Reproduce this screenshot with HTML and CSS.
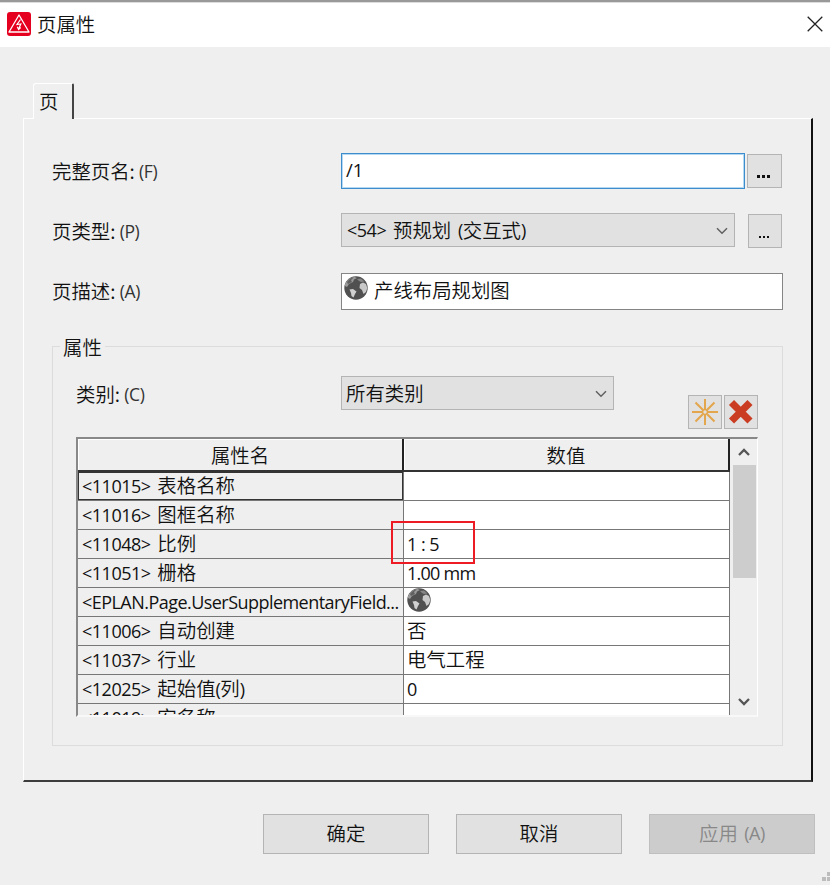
FILE: index.html
```html
<!DOCTYPE html>
<html lang="zh-CN">
<head>
<meta charset="utf-8">
<title>页属性</title>
<link rel="stylesheet" href="styles.css">
</head>
<body>
<svg class="defs" width="0" height="0">
  <symbol id="globe" viewBox="0 0 24 24">
    <circle cx="12" cy="12" r="11.7" fill="#505050"/>
    <path d="M1 8Q4 2 10 .8L13 2 10 3.500 9 6 5 8 3 11 1 10Z" fill="#999"/>
    <path d="M3 6Q6 2 10 1.300L7 4 8 6 4 8Z" fill="#606060"/>
    <path d="M5.500 13.500 9 13 12.500 15.500 11 18 9.500 21.500 7.500 20 7 17Z" fill="#d0d0d0"/>
    <path d="M16 8 19 6.500 22 8 23.300 12 22 16 19.500 18 18 14 15.500 12Z" fill="#c8c8c8"/>
    <path d="M13 3 17 2.500 20.500 5.500 17 6 15 5Z" fill="#858585"/>
  </symbol>
  <symbol id="down" viewBox="0 0 12 8"><path d="M1 1.200 6 6.200 11 1.200" fill="none" stroke="#606060" stroke-width="1.500"/></symbol>
</svg>
<div class="window">
  <header class="titlebar">
    <svg class="app-icon" viewBox="0 0 24 24">
      <rect width="24" height="24" rx="3" fill="#e6001f"/>
      <path d="M12 3 22 20H2Z" fill="none" stroke="#fff" stroke-width="1.300" stroke-linejoin="round"/>
      <path d="M13.500 7.500 10 12.500 13.800 12 11.700 17M10.300 14.700 11.600 17.500 13.700 15.500" fill="none" stroke="#fff" stroke-width="1.200"/>
    </svg>
    <span class="title">页属性</span>
    <svg class="close" viewBox="0 0 16 16"><path d="M.7.700 15.300 15.300M15.300.700.7 15.300" stroke="#222" stroke-width="1.300"/></svg>
  </header>
  <main>
    <div class="tab">页</div>
    <section class="panel">
      <div class="field">
        <label>完整页名: <i>(F)</i></label>
        <div class="input focused"><b>/1</b></div>
        <div class="more bold"><s></s><s></s><s></s></div>
      </div>
      <div class="field">
        <label>页类型: <i>(P)</i></label>
        <div class="select type"><span><b>&lt;54&gt;</b> 预规划 <b>(</b>交互式<b>)</b></span><svg class="chev"><use href="#down"/></svg></div>
        <div class="more small"><s></s><s></s><s></s></div>
      </div>
      <div class="field">
        <label>页描述: <i>(A)</i></label>
        <div class="input desc"><svg class="globe"><use href="#globe"/></svg><span>产线布局规划图</span></div>
      </div>
      <fieldset>
        <legend>属性</legend>
        <div class="category">
          <label>类别: <i>(C)</i></label>
          <div class="select"><span>所有类别</span><svg class="chev"><use href="#down"/></svg></div>
          <div class="tools">
            <div class="tool"><svg viewBox="0 0 28 28"><path d="M14 1V11M14 17V27M1 14H11M17 14H27M4.500 4.500 11.800 11.800M16.200 16.200 23.500 23.500M23.500 4.500 16.200 11.800M11.800 16.200 4.500 23.500" stroke="#e3a64c" stroke-width="2"/><circle cx="14" cy="14" r="2.500" fill="none" stroke="#e3a64c" stroke-width="1.600"/></svg></div>
            <div class="tool"><svg viewBox="0 0 28 28"><path d="M4.500 4.500 23 23M23 4.500 4.500 23" stroke="#cb3d22" stroke-width="7.200"/></svg></div>
          </div>
        </div>
        <div class="grid">
          <div class="table">
            <div class="head"><div>属性名</div><div>数值</div></div>
            <div class="row current"><div><b>&lt;11015&gt;</b> 表格名称</div><div></div></div>
            <div class="row"><div><b>&lt;11016&gt;</b> 图框名称</div><div></div></div>
            <div class="row"><div><b>&lt;11048&gt;</b> 比例</div><div class="marked"><b>1 : 5</b></div></div>
            <div class="row"><div><b>&lt;11051&gt;</b> 栅格</div><div><b class="unit">1.00 mm</b></div></div>
            <div class="row"><div><b class="long">&lt;EPLAN.Page.UserSupplementaryField...</b></div><div><svg class="globe"><use href="#globe"/></svg></div></div>
            <div class="row"><div><b>&lt;11006&gt;</b> 自动创建</div><div>否</div></div>
            <div class="row"><div><b>&lt;11037&gt;</b> 行业</div><div>电气工程</div></div>
            <div class="row"><div><b>&lt;12025&gt;</b> 起始值<b>(</b>列<b>)</b></div><div><b>0</b></div></div>
            <div class="row"><div><b>&lt;11019&gt;</b> 宏名称</div><div></div></div>
          </div>
          <div class="scrollbar">
            <svg viewBox="0 0 12 8"><path d="M1 7 6 2 11 7" fill="none" stroke="#555" stroke-width="2.300"/></svg>
            <div class="thumb"></div>
            <svg viewBox="0 0 12 8"><path d="M1 1 6 6 11 1" fill="none" stroke="#555" stroke-width="2.300"/></svg>
          </div>
        </div>
      </fieldset>
    </section>
  </main>
  <footer>
    <div class="button">确定</div>
    <div class="button">取消</div>
    <div class="button disabled">应用 <i>(A)</i></div>
    <svg class="grip" viewBox="0 0 8 9"><path d="M0 5h4v4H0ZM5 0h3v4H5ZM5 5h3v4H5Z" fill="#bcbcbc"/></svg>
  </footer>
</div>
</body>
</html>
```
FILE: styles.css
```css
*, *::after { box-sizing: border-box; }
body {
  margin: 0;
  background: #fff;
  color: #111;
  font: 19.4px/28px "Noto Sans CJK SC", sans-serif;
  font-weight: 350;
  overflow: hidden;
}
svg { display: block; flex: none; }
.defs { position: absolute; }
b, i {
  font-family: "Open Sans", "Noto Sans", sans-serif;
  font-style: normal;
  font-weight: 400;
  font-size: 18px;
  letter-spacing: -0.5px;
  word-spacing: 0;
  line-height: 1;
  position: relative;
}
b { top: -0.5px; }
i { font-size: 17.5px; letter-spacing: -0.4px; color: #333; top: -1px; }
b.long { letter-spacing: -0.54px; }
b.unit { letter-spacing: -0.75px; }
.window { height: 885px; background: #efefef; position: relative; display: flex; flex-direction: column; }
.titlebar {
  height: 47px;
  flex: none;
  background: #fff;
  border-top: 2px solid #999;
  box-shadow: inset 0 1px #ddd;
  display: flex;
  align-items: center;
  padding: 0 7px;
}
.app-icon { width: 24px; height: 24px; margin-bottom: 1px; }
.title { margin: 0 0 2px 6px; }
.close { width: 16px; height: 16px; margin: 0 0 1px auto; }
main { padding: 36px 17px 0 23px; }
.tab {
  width: 41px;
  height: 36px;
  margin-left: 10px;
  margin-bottom: -1px;
  position: relative;
  background: #efefef;
  border: 1px solid #fff;
  border-right: 2px solid #444;
  border-bottom: 0;
  border-radius: 3px 2px 0 0;
  padding: 3px 0 0 5px;
}
.panel {
  height: 664px;
  border: 1px solid #fff;
  border-right: 2px solid #111;
  border-bottom: 2px solid #3c3c3c;
  padding: 34px 28px 0 28px;
}
.field { display: flex; height: 60px; align-items: flex-start; }
.field label { width: 289px; padding-top: 4px; }
.input { background: #fff; height: 36px; display: flex; padding: 2px 4px; }
.focused { width: 404px; border: 1px solid #3d8ccc; box-shadow: inset 0 0 0 1px #b5d9f2; }
.focused b { font-size: 18.5px; line-height: 28px; letter-spacing: 0; }
.desc { width: 442px; height: 37px; border: 1px solid #858585; padding: 2px 2px; }
.desc span { margin-left: 6px; line-height: 27px; }
.globe { width: 24px; height: 24px; }
.more {
  width: 35px;
  height: 34px;
  margin: 1px 0 0 2px;
  background: #e1e1e1;
  border: 1px solid #b4b4b4;
  display: flex;
  justify-content: center;
  gap: 2px;
  padding: 20px 2px 0 0;
}
.more s { width: 3px; height: 3px; background: #111; }
.more.small { width: 34px; margin-left: 13px; gap: 2px; }
.more.small s { width: 2px; height: 2px; margin-top: 1px; }
.select {
  width: 273px;
  height: 34px;
  background: #e1e1e1;
  border: 1px solid #b4b4b4;
  display: flex;
  align-items: center;
  justify-content: space-between;
  padding: 0 6px 0 4px;
}
.select span { line-height: 30px; margin-bottom: 1px; }
.select.type { width: 394px; padding-left: 5px; word-spacing: 2.5px; }
.chev { width: 12px; height: 8px; margin-top: 1px; }
fieldset {
  margin: 0;
  padding: 0 24px 0 23px;
  min-width: 0;
  width: 731px;
  height: 413px;
  border: 1px solid #dcdcdc;
}
legend { margin-left: -16px; padding: 0 3px; line-height: 27px; }
.category { display: flex; height: 77px; padding-top: 16px; }
.category label { width: 265px; padding-top: 4px; }
.tools { margin: 19px 0 0 74px; display: flex; gap: 2px; }
.tool { width: 34px; height: 34px; padding: 2px; border: 1px solid #b4b4b4; background: #e1e1e1; }
.tool svg { width: 28px; height: 28px; }
.grid {
  width: 682px;
  height: 280px;
  border: 2px solid #888;
  border-right: 1px solid #fff;
  border-bottom: 2px solid #f8f8f8;
  display: flex;
  overflow: hidden;
}
.table { width: 652px; flex: none; }
.head, .row { display: grid; grid-template-columns: 326px 326px; }
.head { height: 33px; border-bottom: 2px solid #333; text-align: center; line-height: 31px; }
.head div { border-right: 2px solid #222; box-shadow: inset 1px 1px #fff; }
.row { height: 29px; border-bottom: 1px solid #777; white-space: pre; word-spacing: 2.5px; }
.row > div { padding-left: 4px; height: 28px; line-height: 25px; border-right: 1px solid #777; }
.row > div:last-child { background: #fff; padding-left: 3px; }
.current > div:first-child { box-shadow: inset 0 0 0 1px #333; }
.marked { position: relative; }
.marked::after {
  content: "";
  position: absolute;
  left: -13px;
  top: -9px;
  width: 84px;
  height: 43px;
  border: 2px solid #ed1c24;
  z-index: 2;
}
.scrollbar { width: 24px; margin-left: 2px; display: flex; flex-direction: column; align-items: center; }
.scrollbar svg { width: 12px; height: 8px; margin: 9px 0; }
.thumb { width: 23px; height: 113px; background: #cdcdcd; margin-bottom: auto; }
footer { display: flex; gap: 27px; padding: 32px 0 0 263px; }
.button {
  width: 166px;
  height: 40px;
  flex: none;
  text-align: center;
  line-height: 36px;
  background: #e1e1e1;
  border: 1px solid #b4b4b4;
}
.disabled { background: #ccc; border-color: #bfbfbf; color: #888; word-spacing: 2px; }
.disabled i { color: #888; font-size: 18px; }
.grip { position: absolute; right: 0; bottom: 4px; width: 8px; height: 9px; }
```
